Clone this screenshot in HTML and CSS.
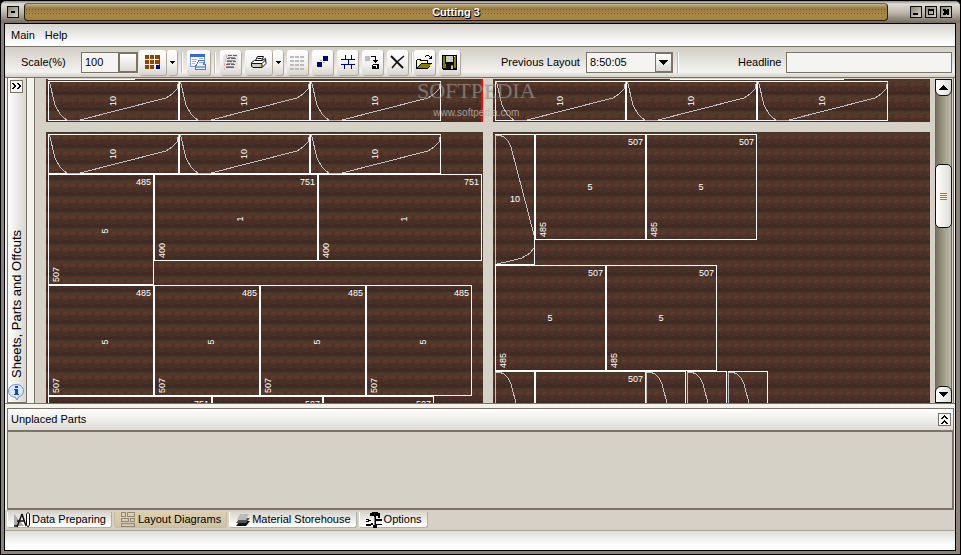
FILE: index.html
```html
<!DOCTYPE html>
<html lang="en">
  <head>
    <meta charset="UTF-8" />
    <meta name="viewport" content="width=device-width, initial-scale=1.0" />
    <title>Cutting 3</title>
    <link rel="stylesheet" href="styles.css">
  </head>
  <body>
    <!-- shared shapes for the sheets -->
    <svg class="defs" width="0" height="0" aria-hidden="true">
      <defs>
        <linearGradient id="grain" x1="0" y1="0" x2="0" y2="1">
          <stop offset="0" stop-color="#4a3528" />
          <stop offset="0.3" stop-color="#563829" />
          <stop offset="0.55" stop-color="#4d3128" />
          <stop offset="0.85" stop-color="#402b24" />
          <stop offset="1" stop-color="#432e25" />
        </linearGradient>
        <pattern id="wood" width="16" height="16" patternUnits="userSpaceOnUse">
          <rect width="16" height="16" fill="url(#grain)" />
          <path d="M0 1.5h5M9 2.5h6" stroke="#503c2b" />
          <path d="M2 4.5h4M9 5.5h4M1 6.5h3" stroke="#613c2c" />
          <path d="M6 8.5h4M1 9.5h2M12 7.5h3" stroke="#472d26" />
          <path d="M3 11.5h2M10 10.5h1M13 12.5h1" stroke="#5c3229" />
          <path d="M1 13.5h4M9 14.5h4" stroke="#3b2822" />
          <path d="M15.5 3v9" stroke="#462f26" />
        </pattern>
        <g id="leaf">
          <rect class="line" x="0.5" y="0.5" width="130" height="39" />
          <path class="curve" d="M1.500 1L7 24L12 33L16 37L20 39.500H30L118 17L124 13L129 8L130.500 1" />
          <text class="num mid" transform="translate(68 20) rotate(-90)">10</text>
        </g>
        <g id="leaf-tall">
          <rect class="line" x="0.5" y="0.5" width="39" height="130" />
          <path class="curve" d="M0.500 130V1H4L9 3L13 7L16 13L39 101M39 114L35 119L27 124L15 127L2 130" />
        </g>
        <g id="part-485">
          <rect class="line" x="0.5" y="0.5" width="105" height="110" />
          <text class="num end" x="103" y="11">485</text>
          <text class="num" transform="translate(11 108) rotate(-90)">507</text>
          <text class="num mid" transform="translate(60 57) rotate(-90)">5</text>
        </g>
        <g id="part-751">
          <rect class="line" x="0.5" y="0.5" width="163" height="86" />
          <text class="num end" x="161" y="11">751</text>
          <text class="num" transform="translate(11 84) rotate(-90)">400</text>
          <text class="num mid" transform="translate(89 45) rotate(-90)">1</text>
        </g>
        <g id="part-507">
          <rect class="line" x="0.5" y="0.5" width="110" height="105" />
          <text class="num end" x="108" y="11">507</text>
          <text class="num" transform="translate(11 103) rotate(-90)">485</text>
          <text class="num mid" x="55" y="56">5</text>
        </g>
      </defs>
    </svg>

    <div class="window">
      <header class="titlebar">
        <button class="win-btn" aria-label="Window menu">
          <svg width="8" height="8"><path d="M2 3h4v2H2z" /></svg>
        </button>
        <h1>Cutting 3</h1>
        <div class="win-btns">
          <button class="win-btn" aria-label="Minimize">
            <svg width="8" height="8"><path d="M1 5h5v2H1z" /></svg>
          </button>
          <button class="win-btn" aria-label="Maximize">
            <svg width="8" height="8"><path fill-rule="evenodd" d="M1 1h6v6H1zM2 3v3h4V3z" /></svg>
          </button>
          <button class="win-btn" aria-label="Close">
            <svg width="8" height="8"><path d="M1 1h2l1 1 1-1h2v2L6 4l1 1v2H5L4 6 3 7H1V5l1-1-1-1z" /></svg>
          </button>
        </div>
      </header>

      <div class="client">
        <nav class="menu">
          <a href="#main">Main</a>
          <a href="#help">Help</a>
        </nav>

        <div class="toolbar">
          <label class="scale-label" for="scale">Scale(%)</label>
          <div class="scale">
            <input id="scale" type="text" value="100" />
            <button aria-label="Apply scale"></button>
          </div>
          <button class="tool wide" aria-label="Grid">
            <svg width="16" height="16">
              <path fill="#8b4500" d="M0 1h4v4H0zM5 1h4v4H5zM10 1h4v4h-4zM0 6h4v4H0zM5 6h4v4H5zM10 6h4v4h-4zM0 11h4v4H0zM5 11h4v4H5z" />
              <path fill="#000080" d="M11 11h4v4h-4z" />
              <path fill="#f00" d="M14 1h1v10h-1z" />
            </svg>
          </button>
          <button class="tool drop" aria-label="Grid options">
            <svg width="5" height="3"><path d="M0 0h5v1H4v1H3v1H2V2H1V1H0z" /></svg>
          </button>
          <span class="sep"></span>
          <button class="tool preview" aria-label="Print preview">
            <svg width="17" height="17">
              <path fill="#fff" stroke="#7a9fe0" d="M.5.500h14v12H.500z" />
              <path fill="#3467d6" d="M0 0h15v3H0z" />
              <path fill="#9db9ea" d="M2 5h5v1H2zM2 7h4v1H2zM2 9h3v1H2zM9 4h4v1H9z" />
              <path fill="#e8effa" stroke="#5579b4" d="M8.500 6.500h6l-1 4h2v5h-10v-4l2-1z" />
              <path fill="#8aaada" d="M6 12h9v2H6zM9 8h4v1H9z" />
            </svg>
          </button>
          <span class="sep"></span>
          <button class="tool" aria-label="Report">
            <svg width="16" height="17">
              <path fill="#e4e4e6" d="M2 0h13v14l-2 3H0V3z" />
              <path fill="#666" d="M5 1h4v1H5zM10 1h4v1h-4zM4 4h3v1H4zM8 4h5v1H8zM4 7h5v1H4zM10 7h3v1h-3zM3 10h4v1H3zM8 10h4v1H8zM3 13h8v1H3z" />
              <path fill="#999" d="M5 3h7v1H5zM4 6h8v1H4zM4 9h7v1H4zM3 12h8v1H3z" />
              <path fill="#f2a6ae" d="M3 1h1v3H3zM2 5h1v3H2zM1 9h1v3H1zM1 14h1v2H1z" />
            </svg>
          </button>
          <button class="tool wide" aria-label="Print">
            <svg class="smooth" width="17" height="15">
              <path fill="#fff" stroke="#111" d="M5.500 5.500L7.500 1.500H13.500L11.500 6M4.500 5.500H12L15.500 3.500L16 8.500L12 12.500H3L1.500 11V7.500L4.500 5.500Z" />
              <path fill="#ccc" stroke="#111" d="M1.500 8.500H12V12.500H3L1.500 11ZM12 8.500L15.500 5" />
              <path stroke="#111" d="M7.500 3.500h4" /><path fill="#d8c72d" d="M9 10h2v1H9z" />
            </svg>
          </button>
          <button class="tool drop" aria-label="Print options">
            <svg width="5" height="3"><path d="M0 0h5v1H4v1H3v1H2V2H1V1H0z" /></svg>
          </button>
          <button class="tool" aria-label="Table" disabled>
            <svg width="15" height="15">
              <path fill="#bcbcbc" d="M0 1h4v2H0zM5 1h4v2H5zM10 1h4v2h-4zM0 5h4v2H0zM5 5h4v2H5zM10 5h4v2h-4zM0 9h4v2H0zM5 9h4v2H5zM10 9h4v2h-4zM0 13h4v2H0zM5 13h4v2H5zM10 13h4v2h-4z" />
            </svg>
          </button>
          <button class="tool" aria-label="Place parts">
            <svg width="14" height="14"><path fill="#000080" d="M7 1h5v5H7zM1 7h5v5H1z" /><path fill="#aab" d="M4 5h2v1H4zM7 7h2v1H7z" /></svg>
          </button>
          <button class="tool" aria-label="Cut lines">
            <svg width="14" height="14"><path fill="#000080" d="M0 4h14v1H0zM0 9h14v1H0zM4 0h1v5H4zM10 0h1v5h-1zM7 5h1v4H7zM3 9h1v5H3zM10 9h1v5h-1z" /></svg>
          </button>
          <button class="tool" aria-label="Move part">
            <svg width="15" height="15">
              <path fill="#bbb" d="M0 1h5v5H0z" />
              <path d="M6 1h5v4h2v1h-1v1h-1v1h-1V7H9V6H8V5h2V2H6zM8 9h6v5H7v-4h1z" />
              <path fill="#fff" d="M8 10h4v1H8zM11 11h1v2h-1z" />
            </svg>
          </button>
          <button class="tool" aria-label="Delete">
            <svg class="smooth" width="15" height="15"><path stroke="#111" stroke-width="2" d="M1 1L13 13" /><path stroke="#111" stroke-width="1.500" d="M14 1L7 7L2 13" /></svg>
          </button>
          <span class="sep tight"></span>
          <button class="tool" aria-label="Open">
            <svg width="17" height="15">
              <path d="M1 4h4v1h7v3h4l-4 6H0V5h1z" /><path fill="#fff9a0" d="M1 5h3v1h7v2H5l-4 5z" />
              <path fill="#808000" d="M5 9h10l-3 4H2z" />
              <path d="M9 1h1v1H9zM10 0h3v1h-3zM13 1h1v1h1V1h1v3h-3V3h1V2h-1z" />
            </svg>
          </button>
          <button class="tool" aria-label="Save">
            <svg width="15" height="15">
              <path d="M0 0h15v15H1l-1-1z" /><path fill="#808000" d="M1 1h2v8h9V1h2v12H1z" />
              <path fill="#ccc" d="M4 1h7v6H4zM9 11h2v3H9z" /><path fill="#111" d="M4 9h8v5h-1v-4H9v4H4z" /><path fill="#fff" d="M12 1h1v1h-1z" />
            </svg>
          </button>

          <label class="previous-label" for="previous">Previous Layout</label>
          <div class="combo">
            <select id="previous"><option>8:50:05</option></select>
            <span class="combo-arrow"><svg width="9" height="5"><path d="M0 0h9v1H8v1H7v1H6v1H5v1H4V4H3V3H2V2H1V1H0z" /></svg></span>
          </div>
          <span class="sep tight"></span>
          <label class="headline-label" for="headline">Headline</label>
          <input class="headline" id="headline" type="text" />
        </div>

        <main class="work">
          <aside class="side">
            <button class="small-btn" aria-label="Expand panel">
              <svg width="9" height="7"><path d="M0 0h2v1h1v1h1v2H3v1H2v1H0V5h1V4h1V2H1V1H0zM5 0h2v1h1v1h1v2H8v1H7v1H5V5h1V4h1V2H6V1H5z" /></svg>
            </button>
            <span class="side-title">Sheets, Parts and Offcuts</span>
            <svg class="smooth" width="16" height="17">
              <path fill="#dce9fb" stroke="#6a8fd0" d="M8 .500C12 .500 15.500 3 15.500 7C15.500 10 13 12.500 10.500 13L9 16L7 13C3 13 .500 10 .500 7C.500 3 4 .500 8 .500Z" />
              <path fill="#1747a8" d="M7 2h3v2H7zM6 5h4v5h1v1H6v-1h1V6H6z" />
            </svg>
          </aside>

          <section class="viewer">
            <div class="sheets">
              <svg class="sheet">
                <rect width="100%" height="100%" fill="url(#wood)" />
                <path class="line" d="M2 .500H89" />
                <use href="#leaf" x="2" y="2" />
                <use href="#leaf" x="133" y="2" />
                <use href="#leaf" x="264" y="2" />
                <path class="mark" d="M436 0V43" />
              </svg>
              <svg class="sheet">
                <rect width="100%" height="100%" fill="url(#wood)" />
                <path class="line" d="M177 .500H351" />
                <use href="#leaf" x="2" y="2" />
                <use href="#leaf" x="133" y="2" />
                <use href="#leaf" x="264" y="2" />
              </svg>
              <svg class="sheet">
                <rect width="100%" height="100%" fill="url(#wood)" />
                <use href="#leaf" x="2" y="2" />
                <use href="#leaf" x="133" y="2" />
                <use href="#leaf" x="264" y="2" />
                <use href="#part-485" x="2" y="42" />
                <use href="#part-751" x="108" y="42" />
                <use href="#part-751" x="272" y="42" />
                <use href="#part-485" x="2" y="153" />
                <use href="#part-485" x="108" y="153" />
                <use href="#part-485" x="214" y="153" />
                <use href="#part-485" x="320" y="153" />
                <use href="#part-751" x="2" y="264" />
                <use href="#part-507" x="166" y="264" />
                <use href="#part-507" x="277" y="264" />
              </svg>
              <svg class="sheet">
                <rect width="100%" height="100%" fill="url(#wood)" />
                <use href="#leaf-tall" x="2" y="2" />
                <text class="num mid" x="22" y="70">10</text>
                <use href="#part-507" x="42" y="2" />
                <use href="#part-507" x="153" y="2" />
                <use href="#part-507" x="2" y="133" />
                <use href="#part-507" x="113" y="133" />
                <use href="#leaf-tall" x="2" y="239" />
                <use href="#part-507" x="42" y="239" />
                <use href="#leaf-tall" x="153" y="239" />
                <use href="#leaf-tall" x="194" y="239" />
                <use href="#leaf-tall" x="235" y="239" />
              </svg>
            </div>
            <div class="scrollbar">
              <button class="scroll-btn up" aria-label="Scroll up">
                <svg width="9" height="5"><path d="M4 0h1v1h1v1h1v1h1v1h1v1H0V4h1V3h1V2h1V1h1z" /></svg>
              </button>
              <div class="thumb"><span></span></div>
              <button class="scroll-btn down" aria-label="Scroll down">
                <svg width="9" height="5"><path d="M0 0h9v1H8v1H7v1H6v1H5v1H4V4H3V3H2V2H1V1H0z" /></svg>
              </button>
            </div>
            <div class="watermark">
              <strong>SOFTPEDIA</strong>
              <span>www.softpedia.com</span>
            </div>
          </section>
        </main>

        <section class="unplaced">
          <header>
            <h2>Unplaced Parts</h2>
            <button class="small-btn" aria-label="Collapse panel">
              <svg width="7" height="9"><path d="M3 0h1v1h1v1h1v1h1v1H5V3H4V2H3v1H2v1H0V3h1V2h1V1h1zM3 5h1v1h1v1h1v1h1v1H5V8H4V7H3v1H2v1H0V8h1V7h1V6h1z" /></svg>
            </button>
          </header>
          <div class="unplaced-list"></div>
        </section>

        <nav class="tabs">
          <button class="tab">
            <svg class="smooth" width="16" height="16">
              <path fill="#aaa" d="M0 2L10 14H0z" /><path stroke="#111" stroke-width="1.500" d="M8 2L3 15M8 2L12 14M3 9H11M0 14H4" />
              <path fill="#fff" stroke="#111" d="M12.500 13V2L14 .500L15.500 2V13L14 15Z" />
            </svg>
            Data Preparing
          </button>
          <button class="tab active">
            <svg width="15" height="15">
              <path stroke="#918a7c" d="M.5.500h4v4h-4zM6.500.500h7v4h-7zM.500 6.500h7v3h-7zM9.500 6.500h4v3h-4zM.500 11.500h13v3h-13z" />
            </svg>
            Layout Diagrams
          </button>
          <button class="tab">
            <svg class="smooth" width="14" height="14">
              <path fill="#111" d="M4 8H14L10 13H0z" /><path fill="#555" d="M4 5H14L10 10H0z" /><path fill="#bbb" d="M4 1H13L10 7H1z" />
            </svg>
            Material Storehouse
          </button>
          <button class="tab">
            <svg width="16" height="16">
              <path d="M4 1h2V0h6v1h2v5h-2V4h-2v9h1v3H7v-3h1V4H4zM0 7h3v1h2v1H3v1H0V9h2V8H0zM10 7h6v2h-6zM0 12h5v-1h2v2H5v1H0zM10 12h6v1h-6z" /><path fill="#777" d="M8 5h1v8H8z" />
            </svg>
            Options
          </button>
        </nav>
        <footer class="status"></footer>
      </div>
    </div>
  </body>
</html>
```

FILE: styles.css
```css
* {
  box-sizing: border-box;
}

body {
  margin: 0;
  height: 100vh;
  background: #000;
  font-family: "Liberation Sans", Arial, sans-serif;
  font-size: 11px;
  line-height: 13px;
  color: #000;
}

button,
input,
select {
  margin: 0;
  padding: 0;
  border: none;
  border-radius: 0;
  font: inherit;
  color: inherit;
}

svg {
  display: block;
  flex: none;
  fill: none;
  shape-rendering: crispEdges;
}

button svg:not(.smooth),
.combo-arrow svg {
  fill: #000;
}

.tab.active svg {
  fill: none;
}

svg.smooth {
  shape-rendering: auto;
}

.defs {
  position: absolute;
}

/* window frame */
.window {
  display: flex;
  flex-direction: column;
  height: 100vh;
  padding: 0 4px 3px 3px;
  background: #8b8378;
  border: 1px solid #000;
  border-radius: 6px 6px 0 0;
}

.titlebar {
  display: flex;
  align-items: center;
  height: 22px;
  flex: none;
  margin: 0 -4px 0 -3px;
  padding: 1px 8px 2px 6px;
  background: linear-gradient(#8f8a83, #e0ddd7 3px, #b9b3a9 12px, #746a5c);
  border-radius: 5px 5px 0 0;
}

.titlebar h1 {
  flex: 1;
  height: 18px;
  margin: 0 22px 0 5px;
  border: 1px solid #241c10;
  border-top-color: #6b665e;
  border-radius: 4px;
  background:
    radial-gradient(circle, #75602e 0.500px, transparent 1px) 0 4px / 3px 3px repeat-x,
    radial-gradient(circle, #75602e 0.500px, transparent 1px) 0 8px / 3px 3px repeat-x,
    linear-gradient(#c5b58f, #9b7b3e 4px, #aa8748 11px, #a3823f);
  color: #fff;
  font-size: 11px;
  line-height: 16px;
  text-align: center;
  text-shadow: 1px 1px 0 #000, 0 1px 0 #000;
}

.win-btns {
  display: flex;
  gap: 3px;
}

.win-btn {
  display: flex;
  align-items: center;
  justify-content: center;
  width: 12px;
  height: 12px;
  background: linear-gradient(135deg, #8a8377, #d8d3c9);
  border: 1px solid #111;
}

.client {
  display: flex;
  flex-direction: column;
  flex: 1;
  min-height: 0;
  border: 1px solid #000;
  background: #d5d1c7;
}

/* menu and toolbar */
.menu {
  display: flex;
  align-items: center;
  gap: 10px;
  height: 23px;
  flex: none;
  padding-left: 6px;
  background: linear-gradient(#d6d3cc, #fff 20px);
  border-bottom: 1px solid #7b7365;
}

.menu a {
  color: #000;
  text-decoration: none;
}

.toolbar {
  display: flex;
  align-items: center;
  height: 31px;
  flex: none;
  padding: 0 3px 0 16px;
  background: linear-gradient(#d2cec5, #f3f2ef 25px, #d2cec5);
  border-bottom: 1px solid #7b7365;
  white-space: nowrap;
}

.scale-label {
  width: 60px;
}

.scale,
.combo {
  display: flex;
  height: 21px;
  border: 1px solid #7b7365;
  background: #f5f4f2;
}

.scale {
  width: 57px;
  margin-right: 1px;
}

.scale input,
.combo select {
  flex: 1;
  min-width: 0;
  padding-left: 3px;
  background: none;
  outline: none;
  appearance: none;
}

.scale button {
  width: 19px;
  border: 2px solid #7b7365;
  border-width: 1px 1px 1px 2px;
  background: linear-gradient(#fff, #dcdad5);
}

.tool {
  display: flex;
  align-items: center;
  justify-content: center;
  width: 21px;
  height: 25px;
  flex: none;
  margin-right: 4px;
  border-radius: 3px;
  background: linear-gradient(#fff, #f1f0ed 15px, #d8d5ce);
  box-shadow: 1px 1px 1px #a9a498;
}

.tool.wide {
  width: 27px;
  margin-right: 1px;
}

.tool.preview {
  width: 23px;
}

.tool.drop {
  width: 10px;
}

.sep {
  width: 2px;
  height: 21px;
  flex: none;
  margin-right: 4px;
  background: #fff;
  border-left: 1px solid #c2beb4;
}

.sep.tight {
  margin: 0 1px 0 -1px;
}

.previous-label {
  margin-left: 37px;
  width: 85px;
}

.combo {
  width: 87px;
  margin-right: 5px;
}

.combo-arrow {
  display: flex;
  align-items: center;
  justify-content: center;
  width: 17px;
  border: 1px solid #7b7365;
  background: linear-gradient(#fff, #dcdad5);
}

.headline-label {
  margin-left: 58px;
  width: 48px;
}

.headline {
  flex: 1;
  min-width: 0;
  height: 21px;
  padding: 0 4px;
  border: 1px solid #7b7365;
  background: #f5f4f2;
}

/* work area */
.work {
  display: flex;
  flex: 1;
  min-height: 0;
  padding: 0 1px 0 2px;
  background: #f3f2ec;
}

.side {
  display: flex;
  flex-direction: column;
  align-items: center;
  gap: 6px;
  width: 20px;
  flex: none;
  padding: 2px 2px 1px 0;
  border: 1px solid #7b7365;
  border-top: none;
  background: linear-gradient(90deg, #fff, #dad7cf);
}

.small-btn {
  display: flex;
  align-items: center;
  justify-content: center;
  width: 13px;
  height: 13px;
  flex: none;
  background: #f7f6f4;
  border: 1px solid #7b7365;
}

.side-title {
  margin-top: auto;
  writing-mode: vertical-rl;
  transform: rotate(180deg);
  font-size: 13px;
  line-height: 15px;
  white-space: nowrap;
}

.viewer {
  position: relative;
  display: flex;
  flex: 1;
  min-width: 0;
  margin-left: 7px;
  padding: 1px 1px 0 11px;
  border: 1px solid #7b7365;
  border-width: 0 1px;
  background: #d5d1c7;
}

.sheets {
  display: grid;
  grid-template-columns: 1fr 1fr;
  grid-template-rows: 43px 1fr;
  gap: 10px;
  flex: 1;
  min-width: 0;
  margin-right: 5px;
}

.sheet {
  width: 100%;
  height: 100%;
  min-height: 0;
  overflow: hidden;
}

.line {
  stroke: #fff;
}

.curve {
  stroke: #c0c0c0;
}

.mark {
  stroke: #f00;
  stroke-width: 2px;
}

.num {
  fill: #fff;
  font-size: 9px;
}

.mid {
  text-anchor: middle;
}

.end {
  text-anchor: end;
}

.scrollbar {
  display: flex;
  flex-direction: column;
  width: 17px;
  flex: none;
  border: 1px solid #6d675a;
  border-width: 0 1px;
  background: linear-gradient(90deg, #777260, #aaa795 10px, #bbb8a8);
}

.scroll-btn,
.thumb {
  display: flex;
  align-items: center;
  justify-content: center;
  flex: none;
  margin: 0 -1px;
  border: 1px solid #111;
  background: linear-gradient(90deg, #fff, #dedcd5);
}

.scroll-btn {
  height: 17px;
}

.up {
  border-radius: 0 0 6px 6px;
}

.down {
  margin-top: auto;
  border-radius: 6px 6px 0 0;
}

.thumb {
  height: 64px;
  margin-top: 68px;
  border-radius: 5px;
}

.thumb span {
  width: 7px;
  height: 7px;
  background: repeating-linear-gradient(#8b8062 0 1px, transparent 1px 2px);
}

.watermark {
  position: absolute;
  top: 2px;
  left: 382px;
  display: flex;
  flex-direction: column;
  align-items: center;
  color: rgba(180, 176, 172, 0.5);
  pointer-events: none;
}

.watermark strong {
  font: 22px/22px "Liberation Serif", serif;
  text-shadow: 1px 1px 0 rgba(90, 80, 75, 0.4);
}

.watermark span {
  font-size: 10px;
  line-height: 22px;
  color: rgba(185, 182, 180, 0.8);
}

/* bottom panel */
.unplaced {
  display: flex;
  flex-direction: column;
  height: 107px;
  flex: none;
  padding: 4px 1px 0 2px;
  background: #f3f2ec;
  border-top: 1px solid #7b7365;
}

.unplaced header {
  display: flex;
  align-items: center;
  justify-content: space-between;
  height: 22px;
  flex: none;
  padding: 0 2px 0 3px;
  border: 1px solid #7b7365;
  border-bottom: none;
  background: linear-gradient(#fff, #dedbd5);
}

.unplaced h2 {
  margin: 0;
  font-size: 11px;
  font-weight: normal;
}

.unplaced-list {
  flex: 1;
  border: 2px solid #7b7365;
  border-width: 2px 2px 2px 1px;
  background: #d5d1c7;
}

.tabs {
  display: flex;
  align-items: flex-start;
  gap: 2px;
  height: 21px;
  flex: none;
  padding: 2px 2px 0;
  background: #d5d1c7;
  border-bottom: 1px solid #aaa498;
}

.tab {
  display: flex;
  align-items: center;
  gap: 2px;
  height: 16px;
  padding: 0 5px 0 6px;
  border: 1px solid #b4afa4;
  border-top: none;
  border-left-color: #fff;
  border-radius: 0 0 3px 3px;
  background: linear-gradient(#d9d6cf, #fff 14px);
  white-space: nowrap;
}

.tab.active {
  background: linear-gradient(#ded0ad, #cfc3a5);
  border-color: #c8bda0;
}

.status {
  height: 19px;
  flex: none;
  background: linear-gradient(#dfdcd6, #fff 14px);
}
```
